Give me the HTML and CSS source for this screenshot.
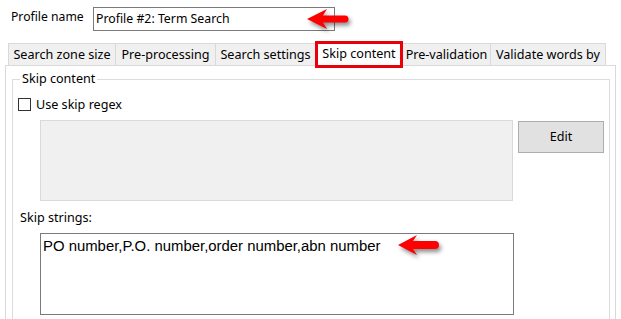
FILE: index.html
```html
<!DOCTYPE html>
<html>
<head>
<meta charset="utf-8">
<link rel="stylesheet" href="styles.css">
</head>
<body>
<div class="top">
  <span class="pname">Profile name</span>
  <div class="pinput">Profile #2: Term Search</div>
</div>
<svg class="arrow arrow-top" width="52" height="28" viewBox="0 0 52 28">
  <path d="M1,10 L21,0 L17,6.5 L39,6.5 A3.5,3.5 0 0 1 39,13.5 L17,13.5 L21,20 Z"/>
</svg>
<div class="tabs">
  <div class="tab t1">Search zone size</div>
  <div class="tab t2">Pre-processing</div>
  <div class="tab t3">Search settings</div>
  <div class="tab sel">Skip content</div>
  <div class="tab t5">Pre-validation</div>
  <div class="tab t6">Validate words by</div>
</div>
<div class="panel">
  <fieldset class="group">
    <legend>Skip content</legend>
    <div class="chkrow"><span class="chk"></span><span class="chklabel">Use skip regex</span></div>
    <div class="regexrow">
      <div class="regexbox"></div>
      <div class="btn">Edit</div>
    </div>
    <div class="sslabel">Skip strings:</div>
    <div class="textarea">PO number,P.O. number,order number,abn number</div>
  </fieldset>
</div>
<svg class="arrow arrow-bottom" width="48" height="26" viewBox="0 0 48 26">
  <path d="M1,10 L20,0 L16,6 L38,6 A4,4 0 0 1 38,14 L16,14 L20,20 Z"/>
</svg>
</body>
</html>
```
FILE: styles.css
```css
html, body {
  margin: 0;
  padding: 0;
}
body {
  width: 621px;
  height: 319px;
  overflow: hidden;
  position: relative;
  background: #ffffff;
  color: #000000;
  font-family: "Noto Sans", sans-serif;
  font-size: 12.6px;
}
.top {
  height: 43px;
  box-sizing: border-box;
  padding: 7px 0 0 11px;
  display: flex;
  align-items: flex-start;
}
.pname {
  width: 82px;
  line-height: 20px;
  font-size: 12.2px;
}
.pinput {
  width: 242px;
  height: 24px;
  box-sizing: border-box;
  border: 1px solid #7a7a7a;
  padding-left: 2px;
  line-height: 22px;
  font-size: 12.3px;
}
.arrow {
  position: absolute;
  overflow: visible;
}
.arrow path {
  fill: #ff0000;
  filter: drop-shadow(2px 3px 2px rgba(0, 0, 0, 0.45));
}
.arrow-top {
  left: 306px;
  top: 9px;
}
.arrow-bottom {
  left: 397px;
  top: 235px;
}
.tabs {
  display: flex;
  align-items: flex-end;
  height: 22px;
  padding-left: 8px;
  position: relative;
  z-index: 1;
}
.tab {
  height: 22px;
  box-sizing: border-box;
  border: 1px solid #d9d9d9;
  border-bottom: none;
  background: #f0f0f0;
  margin-left: -1px;
  padding-top: 1px;
  line-height: 20px;
  text-align: center;
  white-space: nowrap;
}
.t1 { width: 108px; margin-left: 0; }
.t2 { width: 101px; }
.t3 { width: 101px; }
.t5 { width: 89px; }
.t6 { width: 116px; }
.tab.sel {
  width: 88px;
  height: 27px;
  margin-bottom: -3px;
  border: 3px solid #e8000b;
  background: #ffffff;
  padding-top: 1px;
  line-height: 17px;
  position: relative;
  z-index: 2;
}
.panel {
  margin-left: 5px;
  width: 611px;
  height: 254px;
  box-sizing: border-box;
  border: 1px solid #d9d9d9;
  border-bottom: none;
  background: #ffffff;
  padding: 5px 5px 0 6px;
}
.group {
  margin: 0;
  padding: 0;
  border: 1px solid #dcdcdc;
  border-bottom: none;
  height: 248px;
  box-sizing: border-box;
  min-width: 0;
}
.group legend {
  margin-left: 7px;
  padding: 0 2px;
  line-height: 16px;
}
.chkrow {
  display: flex;
  align-items: center;
  margin-top: 11px;
  height: 13px;
}
.chk {
  width: 13px;
  height: 13px;
  box-sizing: border-box;
  border: 1px solid #333333;
  background: #ffffff;
  margin-left: 5px;
}
.chklabel {
  margin-left: 5px;
  line-height: 13px;
}
.regexrow {
  display: flex;
  align-items: flex-start;
  margin-top: 9px;
}
.regexbox {
  margin-left: 27px;
  width: 473px;
  height: 81px;
  box-sizing: border-box;
  border: 1px solid #d9d9d9;
  background: #f0f0f0;
}
.btn {
  margin-left: 5px;
  margin-top: 1px;
  width: 86px;
  height: 32px;
  box-sizing: border-box;
  border: 1px solid #adadad;
  background: #e1e1e1;
  text-align: center;
  line-height: 29px;
}
.sslabel {
  margin-top: 9px;
  margin-left: 7px;
  line-height: 16px;
}
.textarea {
  margin-top: 7px;
  margin-left: 27px;
  width: 474px;
  height: 82px;
  box-sizing: border-box;
  border: 1px solid #7a7a7a;
  padding: 4px 2px 0 2px;
  font-family: "Liberation Sans", Arial, sans-serif;
  font-size: 14.9px;
  line-height: 17px;
}
```
